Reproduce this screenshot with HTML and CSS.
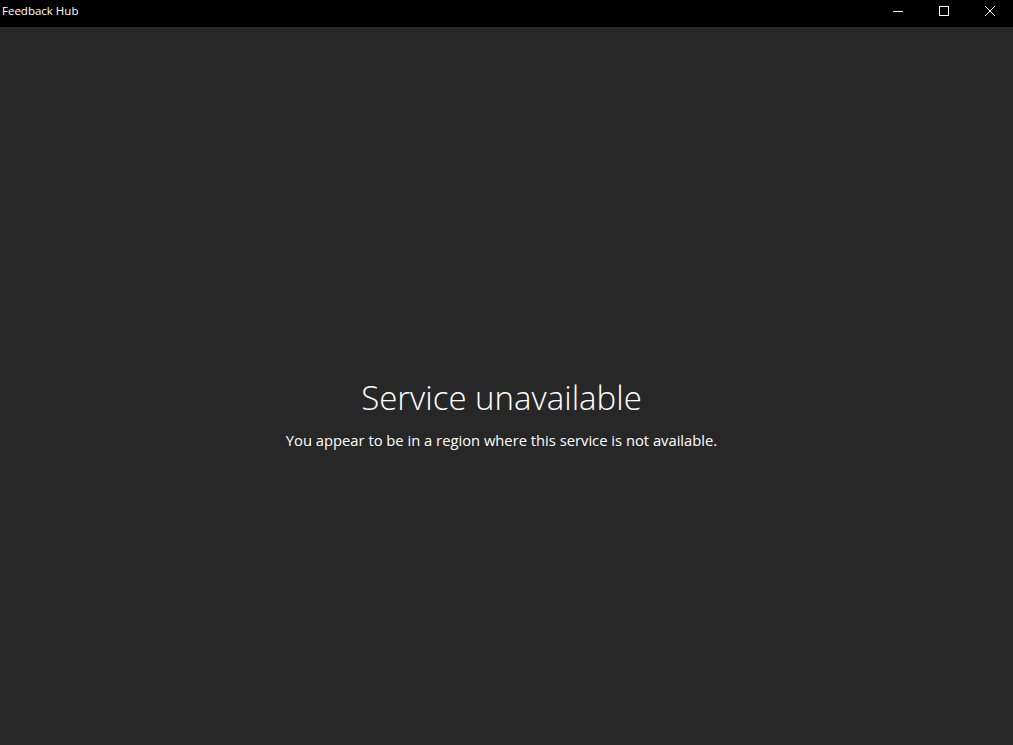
FILE: index.html
```html
<!DOCTYPE html>
<html>
<head>
<meta charset="utf-8">
<link rel="stylesheet" href="styles.css">
</head>
<body>
<div class="window">
  <div class="titlebar">
    <div class="title">Feedback Hub</div>
    <div class="controls">
      <div class="ctrl">
        <svg width="10" height="10" viewBox="0 0 10 10"><path d="M0 5.5H10" stroke="#fff" stroke-width="1"/></svg>
      </div>
      <div class="ctrl">
        <svg width="10" height="10" viewBox="0 0 10 10"><rect x="0.5" y="0.5" width="9" height="9" fill="none" stroke="#fff" stroke-width="1"/></svg>
      </div>
      <div class="ctrl">
        <svg width="10" height="10" viewBox="0 0 10 10"><path d="M0 0L10 10M10 0L0 10" stroke="#fff" stroke-width="1"/></svg>
      </div>
    </div>
  </div>
  <main class="content">
    <h1 class="heading">Service unavailable</h1>
    <p class="message">You appear to be in a region where this service is not available.</p>
  </main>
</div>
</body>
</html>
```
FILE: styles.css
```css
html, body {
  margin: 0;
  padding: 0;
  height: 100%;
  background: #272727;
}
.window {
  display: flex;
  flex-direction: column;
  height: 100%;
  font-family: "Open Sans", "Noto Sans", sans-serif;
  color: #fff;
}
.titlebar {
  height: 27px;
  background: #000;
  display: flex;
  align-items: flex-start;
  justify-content: space-between;
  flex: none;
}
.title {
  font-size: 11.5px;
  line-height: 22px;
  padding-left: 2px;
  color: #fff;
}
.controls {
  display: flex;
}
.ctrl {
  width: 46px;
  height: 22px;
  display: flex;
  align-items: center;
  justify-content: center;
}
.ctrl svg {
  display: block;
}
.content {
  flex: 1;
  display: flex;
  flex-direction: column;
  align-items: center;
  padding-top: 348px;
  padding-right: 10px;
}
.heading {
  margin: 0;
  font-weight: 300;
  font-size: 33px;
  line-height: 46px;
  letter-spacing: 0;
}
.message {
  margin: 9px 0 0;
  font-size: 14.75px;
  line-height: 20px;
}
```
